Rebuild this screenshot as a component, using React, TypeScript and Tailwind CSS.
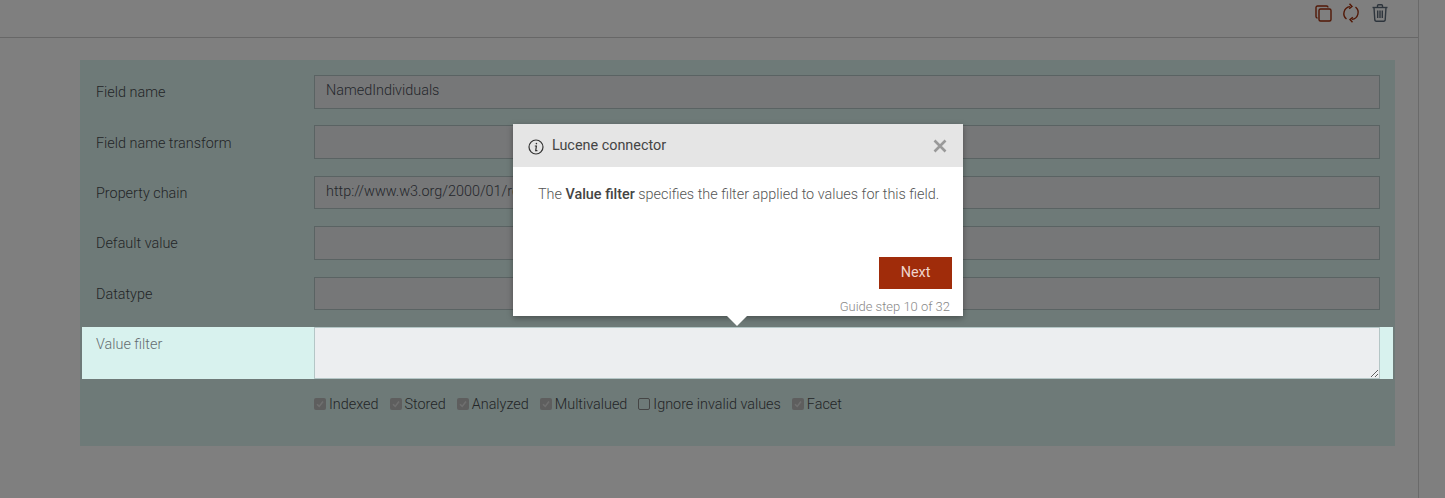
import React from "react";

const rows = [
  { label: "Field name", value: "NamedIndividuals", lift: "pt-[0.5px]" },
  { label: "Field name transform", value: "", lift: "pt-[1.5px]" },
  { label: "Property chain", value: "http://www.w3.org/2000/01/rdf-schema#label", lift: "pt-[1.5px]" },
  { label: "Default value", value: "", lift: "pt-[0.5px]" },
  { label: "Datatype", value: "", lift: "pt-[1.5px]" },
];

const checks = [
  { label: "Indexed", on: true },
  { label: "Stored", on: true },
  { label: "Analyzed", on: true },
  { label: "Multivalued", on: true },
  { label: "Ignore invalid values", on: false },
  { label: "Facet", on: true },
];

function Check({ on }: { on: boolean }) {
  return on ? (
    <span className="w-[12px] h-[12px] rounded-[2px] bg-[#bcbcbc] flex items-center justify-center shrink-0">
      <svg width="10" height="10" viewBox="0 0 10 10" fill="none" stroke="#dedede" strokeWidth="1.6">
        <path d="M2 5.2 L4.2 7.4 L8 2.6" />
      </svg>
    </span>
  ) : (
    <span className="w-[12px] h-[12px] rounded-[2px] border border-[#8a8a8a] bg-[#dcf4f1] shrink-0" />
  );
}

export default function App() {
  return (
    <div className="relative w-[1445px] h-[498px] overflow-hidden bg-white font-['Roboto',sans-serif] font-light text-[14.4px] text-[#474b4e]">
      <div className="w-[1419px] h-[498px] border-r border-[#d4d4d4]">
        <div className="h-[38px] border-b border-[#cfcfcf] flex items-start justify-end gap-[9px] pt-[3px] pr-[28px]">
          <svg width="20" height="20" viewBox="0 0 20 20" fill="none" stroke="#a4300c" strokeWidth="1.4" className="-mr-[1px]">
            <rect x="6" y="6" width="12" height="12" rx="1.5" />
            <path d="M4.5 15 h-.2 A1.5 1.5 0 0 1 3 13.5 V4.5 A1.5 1.5 0 0 1 4.5 3 h9 A1.5 1.5 0 0 1 15 4.5" />
          </svg>
          <svg width="20" height="20" viewBox="0 0 20 20" fill="none" stroke="#a4300c" strokeWidth="1.4">
            <path d="M5.5 16 A7 7 0 0 1 9 3.6" />
            <path d="M8.5 0.8 L11 3.4 L8.2 5.8" />
            <path d="M14.5 4 A7 7 0 0 1 11 16.4" />
            <path d="M11.5 19.2 L9 16.6 L11.8 14.2" />
          </svg>
          <svg width="20" height="20" viewBox="0 0 20 20" fill="none" stroke="#5c6b7a" strokeWidth="1.4">
            <path d="M2.5 4.5 H17.5" />
            <path d="M7.5 4.5 V2.8 A1 1 0 0 1 8.5 1.8 H11.5 A1 1 0 0 1 12.5 2.8 V4.5" />
            <path d="M4 4.5 L4.8 17 A1.5 1.5 0 0 0 6.3 18.2 H13.7 A1.5 1.5 0 0 0 15.2 17 L16 4.5" />
            <path d="M7.7 7.5 V15 M10 7.5 V15 M12.3 7.5 V15" />
          </svg>
        </div>

        <div className="ml-[80px] mt-[22px] w-[1315px] h-[386px] bg-[#dcf4f1] pt-[15px] px-[2px]">
          {rows.map((r) => (
            <div key={r.label} className="flex h-[33.6px] mb-[16.8px] pl-[14px] pr-[13px]">
              <label className={`w-[218px] leading-[33.6px] ${r.lift}`}>{r.label}</label>
              <input
                readOnly
                value={r.value}
                className="flex-1 h-full border border-[#b4c6c6] bg-[#eceef0] px-[11px] pb-[2px] text-[#4a4f58] outline-none font-light"
              />
            </div>
          ))}

          <div className="relative z-20 flex h-[52px] pl-[14px] pr-[13px] bg-[#d8f2ee]">
            <label className="w-[218px] pt-[7px] leading-[21px] text-[#646c70]">Value filter</label>
            <textarea readOnly className="flex-1 h-full block border border-[#b4c6c6] bg-[#eceef0] outline-none resize-y" />
          </div>

          <div className="ml-[232px] mt-[15px] flex items-center h-[21px]">
            {checks.map((c) => (
              <label key={c.label} className="flex items-center gap-[3px] mr-[11px]">
                <Check on={c.on} />
                <span>{c.label}</span>
              </label>
            ))}
          </div>
        </div>
      </div>

      <div className="absolute inset-0 z-10 bg-black/50" />

      <div className="absolute z-30 left-[513px] top-[124px] w-[450px] h-[192px] bg-white shadow-[0_2px_6px_rgba(0,0,0,0.35)] flex flex-col">
        <div className="h-[43px] bg-[#e5e5e5] flex items-center pl-[15px] pr-[15px] shrink-0">
          <svg width="16" height="16" viewBox="0 0 16 16" fill="none" stroke="#333" strokeWidth="1.2" className="mt-[3px]">
            <circle cx="8" cy="8" r="7" />
            <path d="M6.8 7 H8.4 L7.7 11.6 H9.4" />
            <circle cx="8.4" cy="4.6" r="0.8" fill="#333" stroke="none" />
          </svg>
          <span className="ml-[8px] font-normal text-[#444]">Lucene connector</span>
          <svg width="14" height="14" viewBox="0 0 14 14" className="ml-auto mr-[1px] mt-[1px]" stroke="#999" strokeWidth="2.6">
            <path d="M1.5 1.5 L12.5 12.5 M12.5 1.5 L1.5 12.5" />
          </svg>
        </div>
        <p className="mt-[17px] pl-[25px] leading-[21px] text-[#555] whitespace-nowrap">
          The <strong className="font-medium text-[#444]">Value filter</strong> specifies the filter applied to values for this field.
        </p>
        <div className="flex justify-end mt-[52px] pr-[11px]">
          <button className="w-[73px] h-[32px] bg-[#a02c0a] text-[#f0d5cc] font-normal">Next</button>
        </div>
        <div className="text-right pr-[13px] mt-[9px] text-[12.96px] leading-[18px] text-[#888]">Guide step 10 of 32</div>
        <div className="absolute left-[214px] top-[192px] w-0 h-0 border-l-[10px] border-r-[10px] border-t-[10px] border-l-transparent border-r-transparent border-t-white" />
      </div>
    </div>
  );
}
